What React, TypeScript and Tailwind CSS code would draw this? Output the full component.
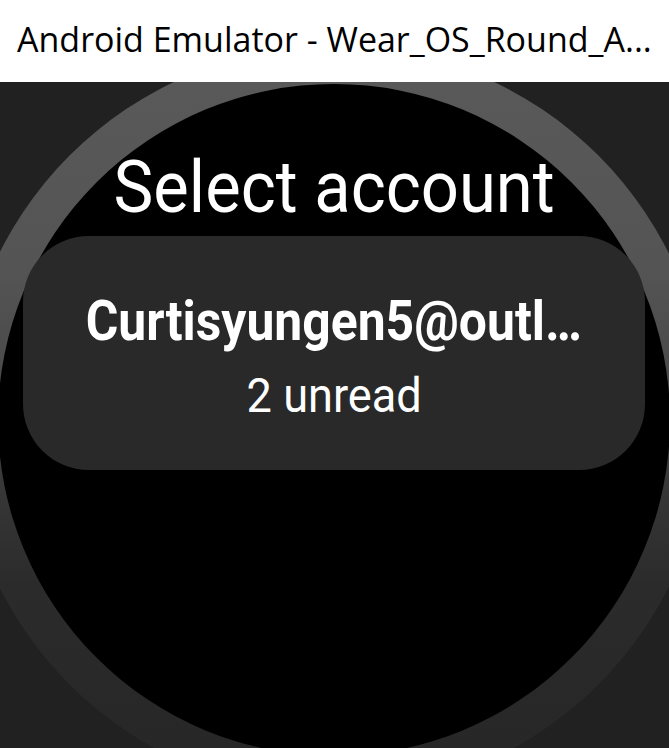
import React from "react";

const WatchFace: React.FC = () => {
  return (
    <div className="relative flex-1 overflow-hidden bg-[#212121]">
      {/* bezel ring */}
      <div className="absolute left-[-40px] top-[-36px] h-[748px] w-[748px] rounded-full bg-[linear-gradient(180deg,#5a5a5a_0%,#545454_30%,#474747_48%,#363636_60%,#2b2b2b_72%,#262626_100%)]" />
      {/* screen */}
      <div className="absolute left-[-2px] top-[2px] flex h-[672px] w-[672px] flex-col items-center rounded-full bg-black pt-[68px]">
        <div className="text-[72px] leading-none text-white font-['Roboto',sans-serif]">
          <span className="inline-block scale-x-[0.93] whitespace-nowrap">Select account</span>
        </div>
        <div className="mt-[12px] flex h-[234px] w-[622px] flex-col items-center rounded-[66px] bg-[#292929] pt-[57px] text-white font-['Roboto',sans-serif]">
          <span className="inline-block scale-x-[0.89] whitespace-nowrap text-[56px] font-bold leading-none">
            Curtisyungen5@outl…
          </span>
          <span className="mt-[23px] inline-block scale-x-[0.94] whitespace-nowrap text-[48px] leading-none">
            2 unread
          </span>
        </div>
      </div>
    </div>
  );
};

const App: React.FC = () => {
  return (
    <div className="flex h-[748px] w-full flex-col">
      <div className="h-[82px] shrink-0 bg-white pl-[17px] pt-[22px]">
        <div className="whitespace-nowrap text-[34px] leading-none text-black font-['Open_Sans',sans-serif]">
          Android Emulator - Wear_OS_Round_A...
        </div>
      </div>
      <WatchFace />
    </div>
  );
};

export default App;
